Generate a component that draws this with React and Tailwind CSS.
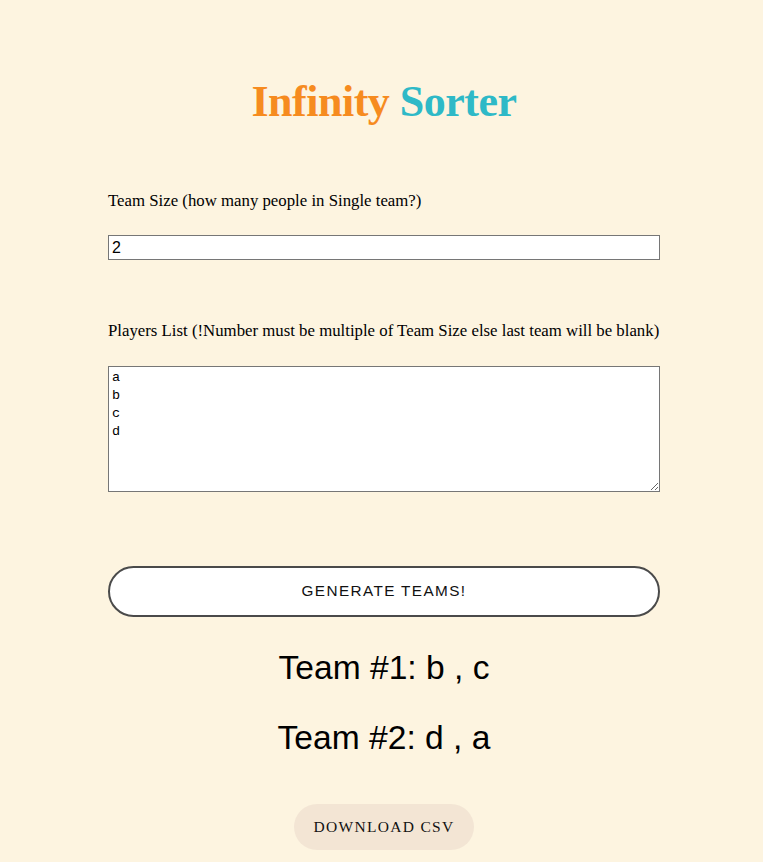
export default function App() {
  const teams = [
    ['b', 'c'],
    ['d', 'a'],
  ]
  return (
    <div className="min-h-[862px] bg-[#fdf4e0] pl-[108px] pr-[103px] pt-[74px] pb-[12px] font-['Liberation_Serif',serif] text-black">
      <h1 className="text-center text-[44px] font-bold leading-[56px] tracking-[-0.5px]">
        <span className="text-[#f68b1f]">Infinity</span>{' '}
        <span className="text-[#2eb9c7]">Sorter</span>
      </h1>

      <label className="mt-[61px] block text-[16.8px] leading-[20px]">Team Size (how many people in Single team?)</label>
      <input
        defaultValue="2"
        className="mt-[24px] block h-[25px] w-full border border-[#767676] bg-white px-[3px] font-['Liberation_Sans',sans-serif] text-[16px] outline-none"
      />

      <label className="mt-[61px] block text-[16.8px] leading-[20px]">
        Players List (!Number must be multiple of Team Size else last team will be blank)
      </label>
      <textarea
        defaultValue={'a\nb\nc\nd'}
        className="mt-[25px] block h-[126px] w-full resize-y border border-[#767676] bg-white px-[3px] py-[2px] font-['Liberation_Mono',monospace] text-[13.5px] leading-[18px] text-black outline-none"
      />

      <button className="mt-[74px] block h-[51px] w-full rounded-full border-2 border-[#4a4a4a] bg-white font-['Liberation_Sans',sans-serif] text-[15.3px] tracking-[1.4px] text-[#111]">
        GENERATE TEAMS!
      </button>

      <div className="mt-[32px] flex flex-col items-center gap-[33px] font-['Liberation_Sans',sans-serif] text-[33.6px] leading-[37px]">
        {teams.map((t, i) => (
          <div key={i}>
            Team #{i + 1}: {t.join(' , ')}
          </div>
        ))}
      </div>

      <div className="mt-[48px] flex justify-center">
        <button className="h-[46px] rounded-full bg-[#f3e5d4] px-[20px] text-[15.5px] tracking-[1.3px] text-[#111]">
          DOWNLOAD CSV
        </button>
      </div>
    </div>
  )
}
